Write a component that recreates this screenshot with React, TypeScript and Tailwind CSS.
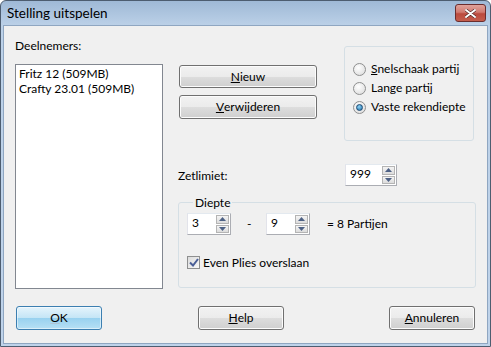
const font = { fontFamily: '"Segoe UI", Lato, "Liberation Sans", sans-serif' };

function WinButton({ label, ul, rest, className = "", isDefault = false }: { label?: string; ul: string; rest: string; className?: string; isDefault?: boolean }) {
  return (
    <div
      className={
        "flex items-center justify-center rounded-[3px] border text-[12px] text-black " +
        (isDefault
          ? "border-[#3c7fb1] bg-[linear-gradient(#e5f4fc_0%,#c4e5f6_50%,#98d1ef_51%,#b6e0f5_100%)] shadow-[inset_0_0_0_1px_#ffffff80]"
          : "border-[#707070] bg-[linear-gradient(#f2f2f2_0%,#ebebeb_50%,#dddddd_51%,#cfcfcf_100%)] shadow-[inset_0_0_0_1px_#fcfcfc]") +
        " " +
        className
      }
    >
      {label}
      <span className={isDefault ? "underline decoration-[#b0c4d4]" : "underline"}>{ul}</span>
      {rest}
    </div>
  );
}

function Spin({ value, className = "" }: { value: string; className?: string }) {
  return (
    <div className={"flex h-[22px] border border-[#abadb3] border-t-[#e3e9ef] border-l-[#e2e3ea] bg-white " + className}>
      <div className="flex-1 pl-[4px] pt-[1px] text-[12px] leading-[16px]">{value}</div>
      <div className="mr-[1px] mt-[1px] flex w-[13px] flex-col gap-[1px]">
        <div className="flex flex-1 items-center justify-center border border-[#b4b4b4] bg-[linear-gradient(#f4f4f4,#dcdcdc)]">
          <svg width="7" height="4" viewBox="0 0 7 4"><path d="M0 4 L3.5 0 L7 4 Z" fill="#4d6185" /></svg>
        </div>
        <div className="mb-[1px] flex flex-1 items-center justify-center border border-[#b4b4b4] bg-[linear-gradient(#f4f4f4,#dcdcdc)]">
          <svg width="7" height="4" viewBox="0 0 7 4"><path d="M0 0 L7 0 L3.5 4 Z" fill="#4d6185" /></svg>
        </div>
      </div>
    </div>
  );
}

function Radio({ checked }: { checked?: boolean }) {
  return (
    <div className="flex h-[13px] w-[13px] items-center justify-center rounded-full border border-[#8e8f8f] bg-[radial-gradient(circle_at_40%_35%,#ffffff,#d8d8d8)]">
      {checked && <div className="h-[7px] w-[7px] rounded-full border border-[#1c4a73] bg-[radial-gradient(circle_at_40%_35%,#8fd3f5,#1e6fa8)]" />}
    </div>
  );
}

export default function App() {
  return (
    <div className="h-[347px] w-[491px] overflow-hidden bg-white" style={font}>
      <div className="flex h-[347px] w-[491px] flex-col rounded-t-[6px] border border-[#4d5d70] bg-[linear-gradient(#9fb9d6,#bcd1e8_25px,#bfd3ea)]">
        <div className="flex h-[24px] items-start justify-between pl-[6px] pr-[4px]">
          <div className="pt-[4px] text-[13.5px] leading-[16px] text-black">Stelling uitspelen</div>
          <div className="mt-[3px] flex h-[18px] w-[31px] items-center justify-center rounded-[3px] border border-[#6b2d2d] bg-[linear-gradient(#e0a39b_0%,#d17a70_45%,#bb4a3d_55%,#c45d4d_100%)]">
            <svg width="11" height="9" viewBox="0 0 11 9">
              <path d="M1 1 L10 8 M10 1 L1 8" stroke="#4a2020" strokeWidth="3.2" strokeLinecap="round" />
              <path d="M1 1 L10 8 M10 1 L1 8" stroke="#ffffff" strokeWidth="2" strokeLinecap="round" />
            </svg>
          </div>
        </div>
        <div className="mx-[2px] mb-[2px] flex flex-1 flex-col border border-[#8fa6c1] bg-[#f0f0f0] pl-[11px] pt-[12px] text-[12px] text-black">
          <div className="flex">
            <div className="flex w-[148px] flex-col">
              <div className="leading-[15px]">Deelnemers:</div>
              <div className="mt-[11px] h-[225px] border border-[#828790] bg-white px-[3px] py-[1px] leading-[15px]">
                <div>Fritz 12 (509MB)</div>
                <div>Crafty 23.01 (509MB)</div>
              </div>
            </div>
            <div className="ml-[15px] mt-[8px] flex w-[298px] flex-col">
              <div className="flex">
                <div className="ml-[1px] mt-[19px] flex w-[138px] flex-col gap-[7px]">
                  <WinButton ul="N" rest="ieuw" className="h-[23px]" />
                  <WinButton ul="V" rest="erwijderen" className="h-[24px]" />
                </div>
                <div className="ml-[27px] flex h-[95px] w-[130px] flex-col gap-[3px] rounded-[3px] border border-[#d5dfe5] pl-[8px] pt-[14px] leading-[16px]">
                  <div className="flex items-center gap-[5px]"><Radio /><span><span className="underline">S</span>nelschaak partij</span></div>
                  <div className="flex items-center gap-[5px]"><Radio /><span>Lange partij</span></div>
                  <div className="flex items-center gap-[5px]"><Radio checked /><span>Vaste rekendiepte</span></div>
                </div>
              </div>
              <div className="mt-[23px] flex items-center">
                <span className="w-[167px] pt-[1px]">Zetlimiet:</span>
                <Spin value="999" className="w-[52px]" />
              </div>
              <fieldset className="mt-[9px] h-[93px] rounded-[3px] border border-[#d5dfe5] px-[8px]">
                <legend className="ml-[6px] px-[2px] leading-[15px]">Diepte</legend>
                <div className="mt-[3px] flex items-center">
                  <Spin value="3" className="w-[44px]" />
                  <span className="ml-[16px] w-[19px]">-</span>
                  <Spin value="9" className="w-[44px]" />
                  <span className="ml-[17px]">= 8 Partijen</span>
                </div>
                <div className="mt-[20px] flex items-center gap-[3px]">
                  <div className="flex h-[13px] w-[13px] items-center justify-center border border-[#8e8f8f] bg-[linear-gradient(135deg,#dcdcdc,#f8f8f8)]">
                    <svg width="10" height="9" viewBox="0 0 10 9"><path d="M1 4.5 L4 7.5 L9 1" fill="none" stroke="#4a5f97" strokeWidth="2" /></svg>
                  </div>
                  <span className="leading-[15px]">Even Plies overslaan</span>
                </div>
              </fieldset>
            </div>
          </div>
          <div className="mt-[17px] flex">
            <WinButton ul="O" rest="K" isDefault className="ml-[1px] h-[24px] w-[86px]" />
            <WinButton ul="H" rest="elp" className="ml-[96px] h-[24px] w-[86px]" />
            <WinButton ul="A" rest="nnuleren" className="ml-[105px] h-[24px] w-[86px]" />
          </div>
        </div>
      </div>
    </div>
  );
}
